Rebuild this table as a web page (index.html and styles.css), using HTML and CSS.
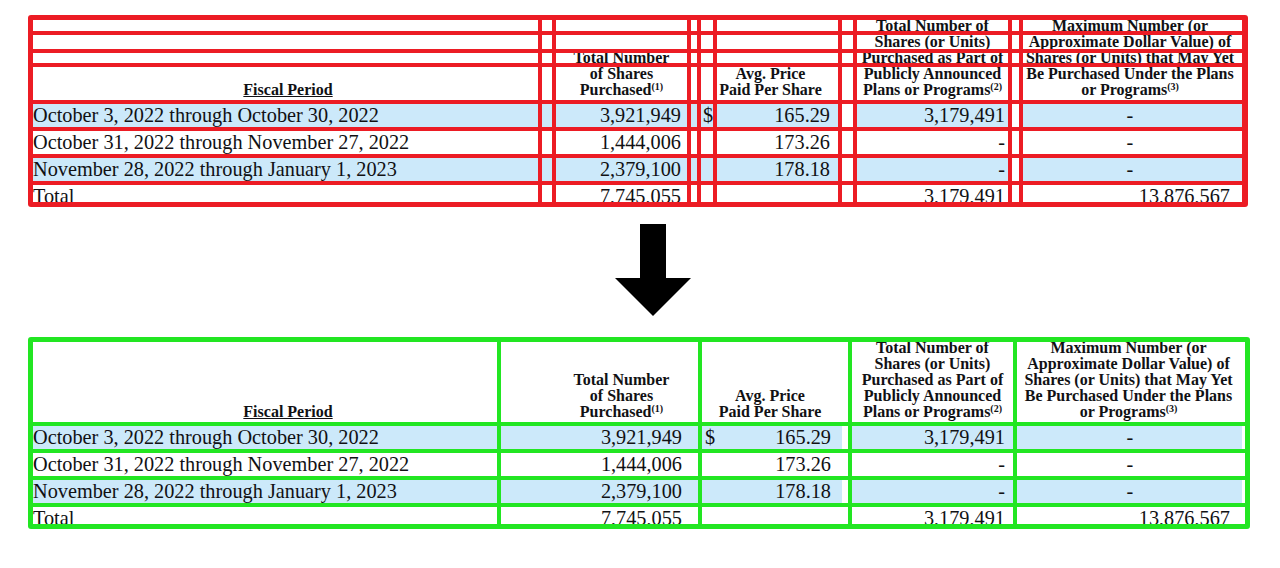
FILE: index.html
```html
<!DOCTYPE html>
<html lang="en">
<head>
<meta charset="utf-8">
<title>Share repurchases</title>
<link rel="stylesheet" href="styles.css">
</head>
<body>
<div class="page">
  <div class="tbl red">
    <!-- header row 1 -->
    <div class="c h"></div><div class="c h"></div><div class="c h"></div><div class="c h"></div><div class="c h"></div><div class="c h"></div><div class="c h"></div>
    <div class="c h"><span>Total Number of</span></div><div class="c h"></div>
    <div class="c h pr5"><span>Maximum Number (or</span></div>
    <!-- header row 2 -->
    <div class="c h"></div><div class="c h"></div><div class="c h"></div><div class="c h"></div><div class="c h"></div><div class="c h"></div><div class="c h"></div>
    <div class="c h"><span>Shares (or Units)</span></div><div class="c h"></div>
    <div class="c h pr5"><span>Approximate Dollar Value) of</span></div>
    <!-- header row 3 -->
    <div class="c h"></div><div class="c h"></div>
    <div class="c h"><span>Total Number</span></div>
    <div class="c h"></div><div class="c h"></div><div class="c h"></div><div class="c h"></div>
    <div class="c h"><span>Purchased as Part of</span></div><div class="c h"></div>
    <div class="c h pr5"><span>Shares (or Units) that May Yet</span></div>
    <!-- header row 4 -->
    <div class="c h end pl5"><span class="u">Fiscal Period</span></div>
    <div class="c h"></div>
    <div class="c h end"><span>of Shares</span><span>Purchased<sup>(1)</sup></span></div>
    <div class="c h"></div><div class="c h"></div>
    <div class="c h end pr14"><span>Avg. Price</span><span>Paid Per Share</span></div>
    <div class="c h"></div>
    <div class="c h end"><span>Publicly Announced</span><span>Plans or Programs<sup>(2)</sup></span></div>
    <div class="c h"></div>
    <div class="c h end pr5"><span>Be Purchased Under the Plans</span><span>or Programs<sup>(3)</sup></span></div>

    <!-- data row 1 -->
    <div class="c d b">October 3, 2022 through October 30, 2022</div>
    <div class="c d b"></div>
    <div class="c d b num rC">3,921,949</div>
    <div class="c d b"></div>
    <div class="c d b dollar">$</div>
    <div class="c d b num rF">165.29</div>
    <div class="c d"></div>
    <div class="c d b num rH">3,179,491</div>
    <div class="c d"></div>
    <div class="c d b mid rJ">-</div>
    <!-- data row 2 -->
    <div class="c d">October 31, 2022 through November 27, 2022</div>
    <div class="c d"></div>
    <div class="c d num rC">1,444,006</div>
    <div class="c d"></div>
    <div class="c d"></div>
    <div class="c d num rF">173.26</div>
    <div class="c d"></div>
    <div class="c d num rH">-</div>
    <div class="c d"></div>
    <div class="c d mid rJ">-</div>
    <!-- data row 3 -->
    <div class="c d b">November 28, 2022 through January 1, 2023</div>
    <div class="c d b"></div>
    <div class="c d b num rC">2,379,100</div>
    <div class="c d b"></div>
    <div class="c d b"></div>
    <div class="c d b num rF">178.18</div>
    <div class="c d"></div>
    <div class="c d b num rH">-</div>
    <div class="c d"></div>
    <div class="c d b mid rJ">-</div>
    <!-- total row -->
    <div class="c d tot">Total</div>
    <div class="c d"></div>
    <div class="c d num rC">7,745,055</div>
    <div class="c d"></div>
    <div class="c d"></div>
    <div class="c d"></div>
    <div class="c d"></div>
    <div class="c d num rH">3,179,491</div>
    <div class="c d"></div>
    <div class="c d num rJn">13,876,567</div>
  </div>

  <div class="arrow">
    <svg width="76" height="92" viewBox="0 0 76 92" aria-hidden="true">
      <rect x="25" y="0" width="26" height="55" fill="#000"/>
      <polygon points="0,54 76,54 38,92" fill="#000"/>
    </svg>
  </div>

  <div class="tbl green">
    <!-- header -->
    <div class="c h end gA"><span class="u">Fiscal Period</span></div>
    <div class="c h end gB"><span>Total Number</span><span>of Shares</span><span>Purchased<sup>(1)</sup></span></div>
    <div class="c h end gC"><span>Avg. Price</span><span>Paid Per Share</span></div>
    <div class="c h end"><span>Total Number of</span><span>Shares (or Units)</span><span>Purchased as Part of</span><span>Publicly Announced</span><span>Plans or Programs<sup>(2)</sup></span></div>
    <div class="c h end pr5"><span>Maximum Number (or</span><span>Approximate Dollar Value) of</span><span>Shares (or Units) that May Yet</span><span>Be Purchased Under the Plans</span><span>or Programs<sup>(3)</sup></span></div>
    <!-- row 1 -->
    <div class="c d b">October 3, 2022 through October 30, 2022</div>
    <div class="c d b num gBn">3,921,949</div>
    <div class="c d bC price"><span>$</span><span>165.29</span></div>
    <div class="c d b num gDn">3,179,491</div>
    <div class="c d bE mid gEm">-</div>
    <!-- row 2 -->
    <div class="c d">October 31, 2022 through November 27, 2022</div>
    <div class="c d num gBn">1,444,006</div>
    <div class="c d num gCn">173.26</div>
    <div class="c d num gDn">-</div>
    <div class="c d mid gEm">-</div>
    <!-- row 3 -->
    <div class="c d b">November 28, 2022 through January 1, 2023</div>
    <div class="c d b num gBn">2,379,100</div>
    <div class="c d bC num gCn">178.18</div>
    <div class="c d b num gDn">-</div>
    <div class="c d bE mid gEm">-</div>
    <!-- total -->
    <div class="c d tot">Total</div>
    <div class="c d num gBn">7,745,055</div>
    <div class="c d"></div>
    <div class="c d num gDn">3,179,491</div>
    <div class="c d num gEn">13,876,567</div>
  </div>
</div>
</body>
</html>
```

FILE: styles.css
```css
html, body {
  margin: 0;
  background: #ffffff;
}

.page {
  padding: 15px 0 0 28px;
  display: flex;
  flex-direction: column;
  align-items: flex-start;
  color: #111114;
  font-family: "Liberation Serif", "Times New Roman", serif;
}

.tbl {
  display: grid;
  column-gap: 4px;
  row-gap: 4px;
  border-radius: 3px;
}

.red {
  background: #ec1c24;
  padding: 5px 6px 5px 5px;
  grid-template-columns: 505px 10px 131px 6px 12px 121px 11px 151px 7px 219px;
  grid-template-rows: 11px 14px 10px 33px 23px 23px 23px 17px;
}

.green {
  background: #22e622;
  padding: 5px;
  grid-template-columns: 464px 197px 146px 161px 228px;
  grid-template-rows: 80px 23px 23px 23px 17px;
}

.c {
  background: #ffffff;
  overflow: hidden;
  min-width: 0;
}

.h {
  display: flex;
  flex-direction: column;
  align-items: center;
  justify-content: center;
  font-weight: bold;
  font-size: 16px;
  line-height: 16px;
  white-space: nowrap;
  text-align: center;
}

.h.end {
  justify-content: flex-end;
  padding-bottom: 2px;
}

.u {
  text-decoration: underline;
}

sup {
  font-size: 10px;
  line-height: 0;
  vertical-align: 5px;
}

.d {
  font-size: 20.3px;
  line-height: 23px;
  white-space: nowrap;
}

.tot {
  line-height: 23px;
}

.b {
  background: #cce9fa;
}

.num {
  text-align: right;
}

.mid {
  text-align: center;
}

.dollar {
  padding-left: 2px;
}

.pl5 { padding-left: 5px; }
.pr5 { padding-right: 5px; }
.pr14 { padding-right: 14px; }

.rC { padding-right: 6px; }
.rF { padding-right: 8px; }
.rH { padding-right: 3px; }
.rJ { padding-right: 5px; }
.rJn { padding-right: 12px; }

/* green table */
.gA { padding-left: 46px; }
.gB { padding-left: 55px; padding-right: 11px; }
.gC { padding-right: 10px; }
.gBn { padding-right: 16px; }
.gCn { padding-right: 17px; }
.gDn { padding-right: 8px; }
.gEm { padding-right: 2px; }
.gEn { padding-right: 15px; }

.bC {
  background: linear-gradient(to right, #cce9fa calc(100% - 6px), #ffffff 0);
}

.bE {
  background: linear-gradient(to right, #cce9fa calc(100% - 3px), #ffffff 0);
}

.price {
  display: flex;
  justify-content: space-between;
  padding-left: 3px;
  padding-right: 17px;
}

.arrow {
  margin: 17px 0 0 587px;
  height: 92px;
  line-height: 0;
}

.arrow + .green {
  margin-top: 21px;
}
```
